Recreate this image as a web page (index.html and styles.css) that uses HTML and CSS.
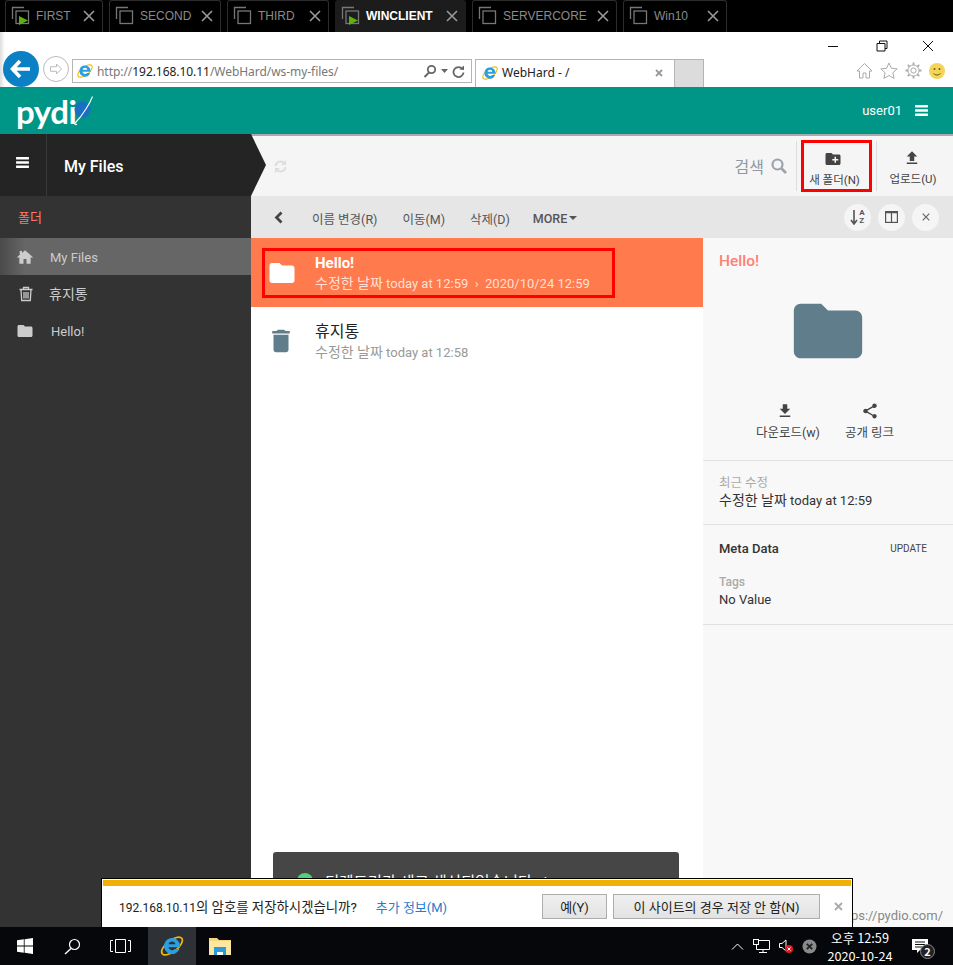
FILE: index.html
```html
<!DOCTYPE html>
<html>
<head>
<meta charset="UTF-8">
<title>WebHard</title>
<link rel="stylesheet" href="styles.css">
</head>
<body>
	<svg class="defs" width="0" height="0">
		<symbol id="i-folder" viewBox="0 0 24 24"><path d="M10 4H4c-1.100 0-2 .9-2 2v12c0 1.100.9 2 2 2h16c1.100 0 2-.9 2-2V8c0-1.100-.9-2-2-2h-8l-2-2z"/></symbol>
		<symbol id="i-trash" viewBox="0 0 24 24"><path d="M6 19c0 1.100.9 2 2 2h8c1.100 0 2-.9 2-2V7H6v12zM19 4h-3.500l-1-1h-5l-1 1H5v2h14V4z"/></symbol>
		<symbol id="i-burger" viewBox="0 0 14 12"><path d="M0 0h14v2.600H0zM0 4.700h14v2.600H0zM0 9.400h14V12H0z"/></symbol>
		<symbol id="i-tab" viewBox="0 0 20 20"><path d="M1.500 13V1.500H13" fill="none" stroke="#777" stroke-width="1.300"/><rect x="5" y="5" width="12.500" height="12.500" fill="none" stroke="#777" stroke-width="1.300"/></symbol>
		<symbol id="i-tabx" viewBox="0 0 12 12"><path d="M1 1l10 10M11 1L1 11" stroke="#999" stroke-width="1.600"/></symbol>
		<symbol id="i-ie" viewBox="0 0 24 24"><ellipse cx="12" cy="12" rx="11.500" ry="5.200" fill="none" stroke="#f2b90f" stroke-width="1.500" transform="rotate(-38 12 12)"/><path d="M12 4.600a7.400 7.400 0 1 0 6.900 10.100h-4.300a3.400 3.400 0 0 1-5.900-1.600h10.600c.1-.4.1-.8.1-1.200A7.400 7.400 0 0 0 12 4.600zM8.800 10.300a3.300 3.300 0 0 1 6.400 0z" fill="#2b9fe0"/></symbol>
	</svg>

	<div class="tabs">
		<div class="tab t-first"><svg class="tab-ico" width="20" height="20"><use href="#i-tab"/></svg><svg class="play" width="9" height="9" viewBox="0 0 9 9"><path d="M0 0l9 4.500L0 9z"/></svg><span>FIRST</span><svg class="tab-x" width="12" height="12"><use href="#i-tabx"/></svg></div>
		<div class="tab t-second"><svg class="tab-ico" width="20" height="20"><use href="#i-tab"/></svg><span>SECOND</span><svg class="tab-x" width="12" height="12"><use href="#i-tabx"/></svg></div>
		<div class="tab t-third"><svg class="tab-ico" width="20" height="20"><use href="#i-tab"/></svg><span>THIRD</span><svg class="tab-x" width="12" height="12"><use href="#i-tabx"/></svg></div>
		<div class="tab t-win active"><svg class="tab-ico" width="20" height="20"><use href="#i-tab"/></svg><svg class="play" width="9" height="9" viewBox="0 0 9 9"><path d="M0 0l9 4.500L0 9z"/></svg><span>WINCLIENT</span><svg class="tab-x" width="12" height="12"><use href="#i-tabx"/></svg></div>
		<div class="tab t-core"><svg class="tab-ico" width="20" height="20"><use href="#i-tab"/></svg><span>SERVERCORE</span><svg class="tab-x" width="12" height="12"><use href="#i-tabx"/></svg></div>
		<div class="tab t-ten"><svg class="tab-ico" width="20" height="20"><use href="#i-tab"/></svg><span>Win10</span><svg class="tab-x" width="12" height="12"><use href="#i-tabx"/></svg></div>
	</div>

	<div class="chrome">
		<div class="win-row">
			<svg width="12" height="12" viewBox="0 0 12 12"><path d="M1 6.500h10" stroke="#111" stroke-width="1"/></svg>
			<svg class="win-max" width="12" height="12" viewBox="0 0 12 12"><path d="M3.500 3V1H11v7.500H9M1 3.500h8V11H1z" fill="none" stroke="#111"/></svg>
			<svg width="12" height="12" viewBox="0 0 12 12"><path d="M1 1l10 10M11 1L1 11" stroke="#111"/></svg>
		</div>
		<div class="addr-row">
			<div class="back-btn"><svg width="22" height="20" viewBox="0 0 22 20"><path d="M10 2L2.500 10l7.500 8M3 10h17" fill="none" stroke="#fff" stroke-width="3.600"/></svg></div>
			<div class="fwd-btn"><svg width="14" height="14" viewBox="0 0 14 14"><path d="M7.500 2l5 5-5 5V9.300H1.500V4.700h6z" fill="none" stroke="#bbb"/></svg></div>
			<div class="addr">
				<svg width="18" height="18"><use href="#i-ie"/></svg>
				<span class="url">http://<b>192.168.10.11</b>/WebHard/ws-my-files/</span>
				<svg class="addr-tool" width="14" height="14" viewBox="0 0 14 14"><circle cx="8.500" cy="5.500" r="3.700" fill="none" stroke="#666" stroke-width="1.800"/><path d="M6 8.500L1.500 13" stroke="#666" stroke-width="2"/></svg>
				<svg class="addr-tool" width="7" height="4" viewBox="0 0 7 4"><path d="M0 0h7L3.500 4z" fill="#666"/></svg>
				<svg class="addr-tool" width="13" height="13" viewBox="0 0 13 13"><path d="M10.500 4A5 5 0 1 0 11.500 7.500" fill="none" stroke="#666" stroke-width="1.800"/><path d="M7.500 4.500L12 5V.5z" fill="#666"/></svg>
			</div>
			<div class="ie-tab">
				<svg width="18" height="18"><use href="#i-ie"/></svg>
				<span class="ie-tab-title">WebHard - /</span>
				<svg width="8" height="8" viewBox="0 0 8 8"><path d="M1 1l6 6M7 1L1 7" stroke="#999" stroke-width="1.800"/></svg>
			</div>
			<div class="ie-newtab"></div>
			<div class="ie-tools">
				<svg width="17" height="17" viewBox="0 0 17 17"><path d="M1 9l7.500-7.500L16 9h-2.500v7H10v-5H7v5H3.500V9z" fill="none" stroke="#aaa"/></svg>
				<svg width="18" height="17" viewBox="0 0 18 17"><path d="M9 1l2.400 5.300 5.800.6-4.300 3.800 1.200 5.700L9 13.500l-5.100 2.900 1.200-5.700L.8 6.900l5.800-.6z" fill="none" stroke="#aaa"/></svg>
				<svg width="17" height="17" viewBox="0 0 17 17"><circle cx="8.500" cy="8.500" r="2.600" fill="none" stroke="#aaa"/><circle cx="8.500" cy="8.500" r="5.500" fill="none" stroke="#aaa" stroke-width="1"/><path d="M8.500.5v2.500M8.500 14v2.500M.5 8.500H3M14 8.500h2.500M2.800 2.800l1.800 1.800M12.400 12.400l1.800 1.800M14.200 2.800l-1.800 1.800M4.600 12.400l-1.800 1.800" stroke="#aaa" stroke-width="1.800"/></svg>
				<svg width="16" height="16" viewBox="0 0 16 16"><circle cx="8" cy="8" r="8" fill="#f5d45a"/><circle cx="5.500" cy="6" r="1" fill="#6b5a10"/><circle cx="10.500" cy="6" r="1" fill="#6b5a10"/><path d="M4.500 10.500c2 2 5 2 7 0" fill="none" stroke="#6b5a10"/></svg>
			</div>
		</div>
	</div>

	<div class="topbar">
		<div class="logo"><span class="logo-text">pydi</span><svg class="logo-mark" width="22" height="32" viewBox="0 0 22 32"><path d="M1.500 14.500a8 8 0 1 0 16 0a8 8 0 1 0-16 0z" fill="#1a6ec4"/><path d="M19.500 1.500C17 8 10 20 3 27c-2 2.500-1 3.500 1 2" fill="none" stroke="#fff" stroke-width="1.100"/></svg></div>
		<div class="user"><span>user01</span><svg width="13" height="11" fill="#fff"><use href="#i-burger"/></svg></div>
	</div>

	<div class="app">
		<div class="app-head">
			<div class="crumb">
				<div class="crumb-menu"><svg width="13" height="11" fill="#fff"><use href="#i-burger"/></svg></div>
				<div class="crumb-title">My Files</div>
			</div>
			<div class="head-right">
				<div class="crumb-arrow"></div>
				<svg class="sync" width="13" height="13" viewBox="0 0 13 13"><path d="M1.500 6A5 5 0 0 1 10.500 3.500M11.500 7A5 5 0 0 1 2.500 9.500" fill="none" stroke="#ddd" stroke-width="2"/><path d="M12 0v5H7zM1 13V8h5z" fill="#ddd"/></svg>
				<div class="search"><span>검색</span><svg width="16" height="16" viewBox="0 0 16 16"><circle cx="6.500" cy="6.500" r="5" fill="none" stroke="#9aa3ab" stroke-width="2.200"/><path d="M10.500 10.500L15 15" stroke="#9aa3ab" stroke-width="2.600"/></svg></div>
				<div class="head-sep"></div>
				<div class="head-btn marked"><svg width="18" height="18" fill="#444" viewBox="0 0 24 24"><path d="M20 6h-8l-2-2H4c-1.110 0-1.990.89-1.990 2L2 18c0 1.110.89 2 2 2h16c1.110 0 2-.89 2-2V8c0-1.110-.89-2-2-2zm-1 8h-3v3h-2v-3h-3v-2h3V9h2v3h3v2z"/></svg><span>새 폴더(N)</span></div>
				<div class="head-sep"></div>
				<div class="head-btn"><svg width="18" height="18" fill="#444" viewBox="0 0 24 24"><path d="M9 16h6v-6h4l-7-7-7 7h4v6zm-4 2h14v2H5v-2z"/></svg><span>업로드(U)</span></div>
			</div>
		</div>

		<div class="app-body">
			<div class="sidebar">
				<div class="side-label">폴더</div>
				<div class="side-item current"><svg class="home" width="18" height="18" viewBox="0 0 24 24"><path d="M10 21v-6.500h4V21h5.500v-8.500H23L12 3 8 6.500V4H5v5L1 12.500h3.500V21z"/></svg><span>My Files</span></div>
				<div class="side-item trash"><svg class="bin" width="16" height="16" viewBox="0 0 16 16"><path d="M1.500 3.500h13M5.500 3V1.500h5V3M3 3.500l.7 11h8.600l.7-11M6 6v6.500M8 6v6.500M10 6v6.500" fill="none" stroke="#ccc" stroke-width="1.300"/></svg><span>휴지통</span></div>
				<div class="side-item"><svg class="fold" width="18" height="18"><use href="#i-folder"/></svg><span>Hello!</span></div>
			</div>

			<div class="content">
				<div class="actions">
					<svg class="act-back" width="9" height="13" viewBox="0 0 9 13"><path d="M7.500 1.500L2.500 6.500l5 5" fill="none" stroke="#444" stroke-width="2.800"/></svg>
					<span class="act a-rename">이름 변경(R)</span>
					<span class="act a-move">이동(M)</span>
					<span class="act a-del">삭제(D)</span>
					<span class="act a-more">MORE<svg width="8" height="4" viewBox="0 0 8 4"><path d="M0 0h8L4 4z" fill="#555"/></svg></span>
					<div class="round-btns">
						<div class="round"><svg width="8" height="15" viewBox="0 0 8 15"><path d="M4 0v13M1 10l3 4 3-4" fill="none" stroke="#555" stroke-width="1.600"/></svg><span class="az">A<br>Z</span></div>
						<div class="round"><svg width="13" height="12" viewBox="0 0 13 12"><rect x=".6" y=".6" width="11.800" height="10.800" fill="none" stroke="#555" stroke-width="1.200"/><path d="M.6 1.600h11.800M6.500 1v10" stroke="#555" stroke-width="1.200"/></svg></div>
						<div class="round"><svg width="8" height="8" viewBox="0 0 8 8"><path d="M.7.700l6.600 6.600M7.300.700L.7 7.300" stroke="#666" stroke-width="1.200"/></svg></div>
					</div>
				</div>

				<div class="panes">
					<div class="list">
						<div class="row selected">
							<div class="row-mark">
								<svg width="30" height="30" fill="#fff"><use href="#i-folder"/></svg>
								<div class="row-text">
									<div class="row-title">Hello!</div>
									<div class="row-sub"><span class="ko">수정한 날짜</span> today at 12:59 &nbsp;›&nbsp; 2020/10/24 12:59</div>
								</div>
							</div>
						</div>
						<div class="row">
							<svg class="row-ico" width="30" height="30" fill="#607d8b"><use href="#i-trash"/></svg>
							<div class="row-text">
								<div class="row-title plain">휴지통</div>
								<div class="row-sub muted"><span class="ko">수정한 날짜</span> today at 12:58</div>
							</div>
						</div>
					</div>

					<div class="info">
						<div class="info-name">Hello!</div>
						<svg class="info-folder" width="82" height="82" fill="#607d8b"><use href="#i-folder"/></svg>
						<div class="info-actions">
							<div class="info-act dl"><svg width="18" height="18" fill="#444" viewBox="0 0 24 24"><path d="M5 20h14v-2H5v2zM19 9h-4V3H9v6H5l7 7 7-7z"/></svg><span>다운로드(w)</span></div>
							<div class="info-act"><svg width="18" height="18" fill="#444" viewBox="0 0 24 24"><path d="M18 16.080c-.76 0-1.440.3-1.960.77L8.910 12.700c.05-.23.09-.46.09-.7s-.04-.47-.09-.7l7.050-4.110c.54.5 1.250.81 2.040.81 1.660 0 3-1.340 3-3s-1.340-3-3-3-3 1.340-3 3c0 .24.04.47.09.7L8.040 9.810C7.500 9.310 6.790 9 6 9c-1.660 0-3 1.340-3 3s1.340 3 3 3c.79 0 1.500-.31 2.040-.81l7.120 4.160c-.05.21-.08.43-.08.65 0 1.610 1.310 2.920 2.920 2.920 1.610 0 2.920-1.310 2.920-2.920s-1.310-2.920-2.920-2.920z"/></svg><span>공개 링크</span></div>
						</div>
						<div class="info-sec recent">
							<div class="info-key">최근 수정</div>
							<div class="info-val"><span class="ko">수정한 날짜</span> today at 12:59</div>
						</div>
						<div class="info-sec meta">
							<div class="meta-head"><b>Meta Data</b><span>UPDATE</span></div>
							<div class="info-key tags">Tags</div>
							<div class="info-val">No Value</div>
						</div>
						<div class="info-foot">https://pydio.com/</div>
					</div>
				</div>
			</div>
		</div>

		<div class="toast"><i></i><span>디렉토리가 새로 생성되었습니다. /</span></div>

		<div class="infobar">
			<div class="infobar-stripe"></div>
			<div class="infobar-body">
				<span class="ib-msg">192.168.10.11<span class="ib-ko">의 암호를 저장하시겠습니까?</span></span>
				<span class="ib-link">추가 정보(M)</span>
				<span class="ib-btn yes">예(Y)</span>
				<span class="ib-btn no">이 사이트의 경우 저장 안 함(N)</span>
				<svg width="9" height="9" viewBox="0 0 9 9"><path d="M1 1l7 7M8 1L1 8" stroke="#aaa" stroke-width="1.800"/></svg>
			</div>
		</div>
	</div>

	<div class="taskbar">
		<svg class="tb-start" width="16" height="16" viewBox="0 0 16 16"><path d="M0 2.300l6.800-1v6.300H0zM7.600 1.200L16 0v7.600H7.600zM0 8.400h6.800v6.300l-6.800-1zM7.600 8.400H16V16l-8.400-1.200z" fill="#fff"/></svg>
		<svg class="tb-search" width="17" height="17" viewBox="0 0 17 17"><circle cx="10.500" cy="6.500" r="5" fill="none" stroke="#fff" stroke-width="1.200"/><path d="M7 10.500L1 16" stroke="#fff" stroke-width="1.400"/></svg>
		<svg class="tb-view" width="21" height="14" viewBox="0 0 21 14"><path d="M5.500.5h10v13h-10zM3 1.500H.5v11H3M18 1.500h2.500v11H18" fill="none" stroke="#fff"/></svg>
		<div class="tb-app active"><svg width="26" height="26"><use href="#i-ie"/></svg></div>
		<div class="tb-app"><svg width="22" height="20" viewBox="0 0 22 20"><path d="M0 2h8l2 2h12v15H0z" fill="#f6d77a"/><path d="M0 5h22v14H0z" fill="#fbe6a2"/><path d="M5 11h12v8H5z" fill="#2a9bd8"/><path d="M8 16h6v3H8z" fill="#fff"/></svg></div>
		<div class="tray">
			<svg width="13" height="7" viewBox="0 0 13 7"><path d="M1 6.500l5.500-5.500L12 6.500" fill="none" stroke="#fff"/></svg>
			<svg width="17" height="15" viewBox="0 0 17 15"><path d="M3.500 1.500h13v9h-13zM10 10.500v3M6 13.500h8" fill="none" stroke="#fff"/><rect x=".5" y=".5" width="5" height="5" fill="#111" stroke="#fff"/></svg>
			<svg width="14" height="14" viewBox="0 0 14 14"><path d="M.5 4.500h2.500L7 1v11L3 8.500H.5z" fill="none" stroke="#fff"/><circle cx="10" cy="10" r="4" fill="#e01b24"/><path d="M8.500 8.500l3 3M11.500 8.500l-3 3" stroke="#fff"/></svg>
			<svg width="15" height="15" viewBox="0 0 15 15"><circle cx="7.500" cy="7.500" r="7" fill="#8a8a8a"/><path d="M4.800 4.800l5.400 5.400M10.200 4.800l-5.400 5.400" stroke="#222" stroke-width="1.800"/></svg>
		</div>
		<div class="clock"><div>오후 12:59</div><div>2020-10-24</div></div>
		<div class="notify"><svg width="16" height="14" viewBox="0 0 16 14"><path d="M0 0h16v11H8l-3 3v-3H0z" fill="#fff"/><path d="M3 3h10M3 5.500h10M3 8h7" stroke="#111"/></svg><span class="notify-num">2</span></div>
	</div>
</body>
</html>
```

FILE: styles.css
```css
html, body {
	margin: 0;
	padding: 0;
}

body {
	width: 953px;
	height: 965px;
	overflow: hidden;
	background-color: #fff;
	font-family: Roboto, "Noto Sans CJK KR", sans-serif;
	font-size: 13px;
	color: #333;
}

svg {
	display: block;
	flex: none;
}

.defs {
	position: absolute;
}

.ko {
	font-size: 14px;
}

/* rdp tabs */
.tabs {
	display: flex;
	gap: 6px;
	height: 32px;
	padding-left: 5px;
	background-color: #000;
}

.tab {
	position: relative;
	display: flex;
	align-items: center;
	box-sizing: border-box;
	height: 32px;
	padding: 0 7px 2px 5px;
	border: 1px solid #2c2c2c;
	border-bottom: none;
	border-radius: 3px 3px 0 0;
	font-family: "Liberation Sans", sans-serif;
	font-size: 12px;
	color: #8a8a8a;
}

.tab span {
	margin-left: 5px;
}

.tab-x {
	margin-left: auto;
}

.tab.active {
	background-color: #1c1c1c;
	border-color: #1c1c1c;
}

.tab.active span {
	color: #fff;
	font-weight: bold;
}

.play {
	position: absolute;
	left: 13px;
	top: 15px;
	fill: #5cb10f;
}

.t-first { width: 98px; }
.t-second { width: 112px; }
.t-third { width: 102px; }
.t-win { width: 131px; }
.t-core { width: 145px; }
.t-ten { width: 104px; }

/* browser */
.chrome {
	height: 55px;
	background: linear-gradient(to right, #ddd, #fff 5px);
}

.win-row {
	display: flex;
	justify-content: flex-end;
	align-items: center;
	gap: 37px;
	height: 26px;
	padding: 2px 19px 0 0;
	box-sizing: border-box;
}

.win-max {
	margin-right: -3px;
}

.addr-row {
	display: flex;
	align-items: flex-start;
	height: 29px;
	overflow: visible;
	padding-left: 3px;
}

.back-btn {
	display: flex;
	align-items: center;
	justify-content: center;
	width: 36px;
	height: 36px;
	margin-top: -7px;
	border-radius: 50%;
	background-color: #0b80c4;
}

.fwd-btn {
	display: flex;
	align-items: center;
	justify-content: center;
	box-sizing: border-box;
	width: 26px;
	height: 26px;
	margin: -2px 0 0 4px;
	border: 1px solid #bbb;
	border-radius: 50%;
}

.addr {
	display: flex;
	align-items: center;
	box-sizing: border-box;
	width: 400px;
	height: 24px;
	margin: 1px 0 0 3px;
	padding: 0 6px 0 3px;
	border: 1px solid #b5b5b5;
}

.url {
	margin-left: 3px;
	margin-right: auto;
	font-family: "Noto Sans", sans-serif;
	font-size: 12px;
	letter-spacing: -0.05px;
	color: #777;
}

.url b {
	font-weight: normal;
	color: #222;
}

.addr-tool {
	margin-left: 4px;
}

.ie-tab {
	display: flex;
	align-items: center;
	box-sizing: border-box;
	width: 200px;
	height: 28px;
	margin: 1px 0 0 3px;
	padding: 0 11px 2px 5px;
	border: 1px solid #b5b5b5;
	border-bottom: none;
}

.ie-tab-title {
	margin-left: 3px;
	margin-right: auto;
	font-family: "Noto Sans", sans-serif;
	font-size: 12px;
	color: #222;
}

.ie-newtab {
	box-sizing: border-box;
	width: 29px;
	height: 28px;
	margin-top: 1px;
	background-color: #dcdcdc;
	border: 1px solid #b5b5b5;
	border-width: 1px 1px 0 0;
}

.ie-tools {
	display: flex;
	align-items: center;
	gap: 7px;
	margin-left: auto;
	padding: 4px 8px 0 0;
}

.topbar {
	display: flex;
	align-items: center;
	justify-content: space-between;
	box-sizing: border-box;
	height: 47px;
	padding: 0 25px 0 16px;
	background-color: #009687;
}

.logo {
	display: flex;
	align-items: center;
}

.logo-text {
	font-family: Lato, sans-serif;
	font-size: 33px;
	font-weight: 700;
	line-height: 34px;
	color: #fff;
	letter-spacing: -0.5px;
}

.logo-mark {
	margin-left: -3px;
}

.user {
	display: flex;
	align-items: center;
	gap: 13px;
	color: #fff;
	font-size: 13px;
}

/* app */
.app {
	position: relative;
	height: 793px;
	display: flex;
	flex-direction: column;
	overflow: hidden;
}

.app-head {
	display: flex;
	height: 62px;
}

.crumb {
	display: flex;
	width: 251px;
	background-color: #242424;
	color: #fff;
}

.crumb-menu {
	display: flex;
	align-items: center;
	justify-content: center;
	box-sizing: border-box;
	width: 47px;
	padding-right: 2px;
	padding-bottom: 5px;
	border-right: 1px solid #383838;
}

.crumb-title {
	padding: 23px 0 0 17px;
	font-size: 16px;
	font-weight: 500;
}

.head-right {
	flex: 1;
	display: flex;
	align-items: center;
	background-color: #f5f5f5;
	border-top: 2px solid #aaa;
}

.crumb-arrow {
	align-self: stretch;
	width: 15px;
	margin-top: -2px;
	background-color: #242424;
	clip-path: polygon(0 0, 100% 50%, 0 100%);
}

.sync {
	margin-left: 8px;
}

.search {
	display: flex;
	align-items: center;
	gap: 7px;
	margin: 0 9px 0 auto;
	font-size: 16px;
	color: #8e9aa5;
}

.head-sep {
	width: 1px;
	height: 50px;
	background-color: #ddd;
}

.head-btn {
	display: flex;
	flex-direction: column;
	align-items: center;
	gap: 3px;
	box-sizing: border-box;
	width: 76px;
	padding: 3px 4px 0 0;
	font-size: 11.500px;
	color: #444;
}

.head-btn svg {
	margin-left: -3px;
}

.head-btn.marked {
	width: 71px;
	height: 52px;
	margin: 0 4px;
	padding: 7px 4px 0 0;
	border: 3px solid #f00;
}

.app-body {
	flex: 1;
	display: flex;
	min-height: 0;
}

.sidebar {
	width: 251px;
	background-color: #333;
	color: #ccc;
}

.side-label {
	height: 42px;
	padding-left: 18px;
	line-height: 44px;
	color: #ff7a6a;
}

.side-item {
	display: flex;
	align-items: center;
	height: 37px;
	padding-left: 16px;
}

.side-item span {
	padding-top: 2px;
}

.side-item.trash span {
	padding: 0 0 2px;
	font-size: 14px;
}

.side-item.current {
	background: linear-gradient(to right, #4a4a4a, #666 25px);
}

.side-item svg {
	fill: #ccc;
}

.side-item .home { margin-right: 16px; }
.side-item .bin { margin: 0 15px 0 2px; }
.side-item .fold { margin-right: 17px; }

.content {
	flex: 1;
	display: flex;
	flex-direction: column;
	min-width: 0;
}

.actions {
	display: flex;
	align-items: center;
	flex: none;
	height: 42px;
	background-color: #e6e6e6;
	color: #555;
	font-size: 12.500px;
}

.act-back {
	margin: 0 29px 0 23px;
}

.act {
	display: flex;
	align-items: center;
	margin-right: 25px;
	padding-top: 2px;
}

.a-del {
	margin-right: 23px;
}

.a-more {
	gap: 2px;
	font-weight: 500;
	margin-right: 0;
}

.round-btns {
	display: flex;
	gap: 7px;
	margin-left: auto;
	padding-right: 14px;
}

.round {
	position: relative;
	display: flex;
	align-items: center;
	justify-content: center;
	gap: 1px;
	width: 27px;
	height: 27px;
	border-radius: 50%;
	background-color: #f5f5f5;
}

.az {
	font-size: 8px;
	line-height: 8px;
	font-weight: 700;
	color: #555;
}

.panes {
	flex: 1;
	display: flex;
	min-height: 0;
}

.list {
	width: 452px;
}

.row {
	display: flex;
	align-items: center;
	box-sizing: border-box;
	height: 69px;
	padding-left: 15px;
}

.row.selected {
	padding: 10px 88px 9px 11px;
	background-color: #ff7a4c;
	color: #fff;
}

.row-mark {
	display: flex;
	align-items: center;
	box-sizing: border-box;
	width: 354px;
	height: 50px;
	padding-left: 2px;
	border: 3px solid #f00;
}

.row-mark .row-text {
	margin-left: 18px;
}

.row-text {
	margin-left: 19px;
}

.row-ico {
	margin-top: -1px;
	margin-right: 0;
}

.row-title {
	font-size: 15px;
	font-weight: 700;
	line-height: 20px;
}

.row-title.plain {
	font-size: 16px;
	font-weight: 400;
	color: #222;
}

.row-sub {
	margin-top: 1px;
	font-size: 13px;
	line-height: 19px;
	color: rgba(255, 255, 255, 0.78);
}

.row-sub.muted {
	color: #999;
}

.info {
	flex: 1;
	display: flex;
	flex-direction: column;
	background-color: #f8f8f8;
}

.info-name {
	height: 52px;
	box-sizing: border-box;
	padding: 14px 0 0 16px;
	font-size: 15.500px;
	font-weight: 500;
	color: #ff7f73;
}

.info-folder {
	align-self: center;
	margin-left: 0;
}

.info-actions {
	display: flex;
	justify-content: center;
	gap: 25px;
	height: 89px;
	box-sizing: border-box;
	padding: 30px 6px 0 0;
	border-bottom: 1px solid #e0e0e0;
}

.info-act {
	display: flex;
	flex-direction: column;
	align-items: center;
	gap: 2px;
	color: #444;
	font-size: 12.500px;
}

.info-act.dl svg {
	margin-left: -5px;
}

.info-sec {
	box-sizing: border-box;
	padding: 0 16px;
	border-bottom: 1px solid #e0e0e0;
}

.recent {
	height: 64px;
	padding-top: 13px;
}

.recent .info-val {
	margin-top: -1px;
}

.info-key {
	font-size: 12.500px;
	line-height: 18px;
	color: #aaa;
}

.info-val {
	font-size: 13px;
	line-height: 18px;
	color: #333;
}

.meta {
	height: 100px;
	padding-top: 14px;
}

.meta-head {
	display: flex;
	justify-content: space-between;
	align-items: center;
	padding-right: 10px;
	height: 18px;
	color: #333;
}

.meta-head b {
	font-weight: 500;
}

.meta-head span {
	font-size: 10px;
	color: #444;
}

.tags {
	margin-top: 16px;
	font-size: 12px;
	font-weight: 500;
}

.info-foot {
	margin-top: auto;
	padding: 0 10px 2px 0;
	line-height: 18px;
	text-align: right;
	color: #888;
}

/* overlays */
.toast {
	position: absolute;
	left: 273px;
	top: 718px;
	display: flex;
	align-items: center;
	gap: 12px;
	box-sizing: border-box;
	width: 406px;
	height: 58px;
	padding-left: 24px;
	background-color: #464646;
	border-radius: 3px;
	color: #fff;
	font-size: 15.500px;
}

.toast i {
	width: 16px;
	height: 16px;
	border-radius: 50%;
	background-color: #4fd27a;
}

.infobar {
	position: absolute;
	left: 101px;
	top: 744px;
	box-sizing: border-box;
	width: 752px;
	height: 49px;
	padding: 1px 1px 0;
	background-color: #fff;
	border: 1px solid #000;
	border-bottom: none;
}

.infobar-stripe {
	height: 6px;
	background-color: #f2b005;
}

.infobar-body {
	display: flex;
	align-items: center;
	height: 40px;
	padding-left: 16px;
	font-size: 12px;
	color: #222;
}

.ib-ko {
	font-size: 13.400px;
}

.ib-link {
	margin-left: 19px;
	font-size: 13px;
	color: #2a7ccb;
}

.ib-btn {
	display: flex;
	align-items: center;
	justify-content: center;
	box-sizing: border-box;
	height: 25px;
	border: 1px solid #adadad;
	background: linear-gradient(#f0f0f0, #e2e2e2);
	font-size: 13px;
}

.ib-btn.yes {
	width: 65px;
	margin-left: auto;
}

.ib-btn.no {
	width: 207px;
	margin: 0 14px 0 6px;
}

.infobar-body svg {
	margin-right: 8px;
}

/* taskbar */
.taskbar {
	display: flex;
	align-items: center;
	height: 38px;
	padding-left: 17px;
	background-color: #05070a;
	color: #fff;
	font-family: "Noto Sans CJK KR", sans-serif;
	font-size: 12.700px;
}

.tb-search {
	margin-left: 31px;
}

.tb-view {
	margin: 0 17px 0 29px;
}

.tb-app {
	display: flex;
	align-items: center;
	justify-content: center;
	width: 48px;
	height: 38px;
}

.tb-app.active {
	background-color: #2e3236;
}

.tray {
	display: flex;
	align-items: center;
	gap: 9px;
	margin-left: auto;
}

.clock {
	width: 80px;
	margin-left: 3px;
	padding-top: 1px;
	text-align: center;
	line-height: 18px;
}

.notify {
	position: relative;
	width: 20px;
	margin: 0 21px 0 12px;
}

.notify-num {
	position: absolute;
	right: -3px;
	top: 5px;
	width: 15px;
	height: 15px;
	box-sizing: border-box;
	border: 1px solid #888;
	border-radius: 50%;
	background-color: #222;
	text-align: center;
	line-height: 13px;
	font-size: 11px;
	font-weight: 700;
}
```
